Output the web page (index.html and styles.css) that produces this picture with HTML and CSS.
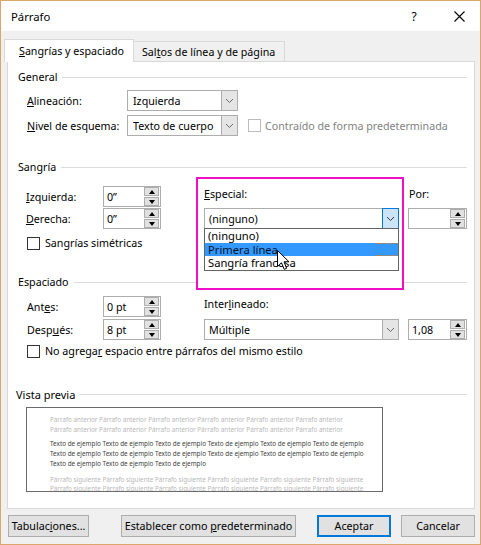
FILE: index.html
```html
<!DOCTYPE html>
<html lang="es">
<head>
<meta charset="utf-8">
<title>Párrafo</title>
<link rel="stylesheet" href="styles.css">
</head>
<body>
<div class="window">
  <div class="titlebar">
    <span class="title">Párrafo</span>
    <span class="help">?</span>
    <span class="close">
      <svg width="11" height="11" viewBox="0 0 11 11"><path d="M0.5 0.5 L10.5 10.5 M10.5 0.5 L0.5 10.5" stroke="#000" stroke-width="1.1" fill="none"/></svg>
    </span>
  </div>

  <div class="client">
    <div class="tabs">
      <div class="tab active"><u>S</u>angrías y espaciado</div>
      <div class="tab">Sal<u>t</u>os de línea y de página</div>
    </div>

    <div class="panel">
      <!-- General -->
      <div class="group general">
        <div class="legend"><span>General</span></div>
        <div class="row first">
          <span class="lbl w100"><u>A</u>lineación:</span>
          <div class="combo w111"><span class="val">Izquierda</span><span class="drop"><svg width="7" height="4" viewBox="0 0 7 4"><path d="M0 0 L3.5 3.5 L7 0" stroke="#6a6a6a" fill="none"/></svg></span></div>
        </div>
        <div class="row">
          <span class="lbl w100"><u>N</u>ivel de esquema:</span>
          <div class="combo w111"><span class="val">Texto de cuerpo</span><span class="drop"><svg width="7" height="4" viewBox="0 0 7 4"><path d="M0 0 L3.5 3.5 L7 0" stroke="#6a6a6a" fill="none"/></svg></span></div>
          <span class="check disabled"></span>
          <span class="check-text disabled">Contraído de forma predeterminada</span>
        </div>
      </div>

      <!-- Sangría -->
      <div class="group sangria">
        <div class="legend"><span>Sangría</span></div>
        <div class="grid g-sangria">
          <span class="lbl c1"><u>I</u>zquierda:</span>
          <div class="spin c2"><span class="val">0”</span><span class="spin-btns"><span class="sb up"></span><span class="sb down"></span></span></div>
          <span class="lbl c4 over top-lbl"><u>E</u>special:</span>
          <span class="lbl c6 top-lbl">Por:</span>

          <span class="lbl c1"><u>D</u>erecha:</span>
          <div class="spin c2"><span class="val">0”</span><span class="spin-btns"><span class="sb up"></span><span class="sb down"></span></span></div>
          <div class="combo c4 over open">
            <span class="val">(ninguno)</span>
            <span class="drop hot"><svg width="7" height="4" viewBox="0 0 7 4"><path d="M0 0 L3.5 3.5 L7 0" stroke="#3c3c3c" fill="none"/></svg></span>
            <ul class="droplist">
              <li>(ninguno)</li>
              <li class="sel">Primera línea<span class="focus-mark"></span></li>
              <li>Sangría francesa</li>
            </ul>
            <svg class="cursor" width="13" height="21" viewBox="0 0 13 21"><path d="M0.5 0.5 L0.5 16.5 L4.5 12.8 L7.2 19.3 L9.6 18.3 L7 11.8 L12 11.8 Z" fill="#fff" stroke="#000" stroke-width="1"/></svg>
          </div>
          <div class="spin c6"><span class="val"></span><span class="spin-btns"><span class="sb up"></span><span class="sb down"></span></span></div>

          <div class="check-row span-all">
            <span class="check"></span>
            <span class="check-text">Sangrías simétricas</span>
          </div>
        </div>
        <div class="callout"></div>
      </div>

      <!-- Espaciado -->
      <div class="group espaciado">
        <div class="legend"><span>Espaciado</span></div>
        <div class="grid g-espaciado">
          <span class="lbl c1">Ant<u>e</u>s:</span>
          <div class="spin c2"><span class="val">0 pt</span><span class="spin-btns"><span class="sb up"></span><span class="sb down"></span></span></div>
          <span class="lbl c4 top-lbl">Inter<u>l</u>ineado:</span>

          <span class="lbl c1">Desp<u>u</u>és:</span>
          <div class="spin c2"><span class="val">8 pt</span><span class="spin-btns"><span class="sb up"></span><span class="sb down"></span></span></div>
          <div class="combo c4"><span class="val">Múltiple</span><span class="drop"><svg width="7" height="4" viewBox="0 0 7 4"><path d="M0 0 L3.5 3.5 L7 0" stroke="#6a6a6a" fill="none"/></svg></span></div>
          <div class="spin c6"><span class="val">1,08</span><span class="spin-btns"><span class="sb up"></span><span class="sb down"></span></span></div>

          <div class="check-row span-all tight">
            <span class="check"></span>
            <span class="check-text">No agrega<u>r</u> espacio entre párrafos del mismo estilo</span>
          </div>
        </div>
      </div>

      <!-- Vista previa -->
      <div class="group preview-group">
        <div class="legend wide"><span>Vista previa</span></div>
        <div class="preview">
          <div class="pl prev">Párrafo anterior Párrafo anterior Párrafo anterior Párrafo anterior Párrafo anterior Párrafo anterior</div>
          <div class="pl prev">Párrafo anterior Párrafo anterior Párrafo anterior Párrafo anterior Párrafo anterior Párrafo anterior</div>
          <div class="pl sample gap">Texto de ejemplo Texto de ejemplo Texto de ejemplo Texto de ejemplo Texto de ejemplo Texto de ejemplo</div>
          <div class="pl sample">Texto de ejemplo Texto de ejemplo Texto de ejemplo Texto de ejemplo Texto de ejemplo Texto de ejemplo</div>
          <div class="pl sample">Texto de ejemplo Texto de ejemplo Texto de ejemplo</div>
          <div class="pl next gap2">Párrafo siguiente Párrafo siguiente Párrafo siguiente Párrafo siguiente Párrafo siguiente Párrafo siguiente</div>
          <div class="pl next last">Párrafo siguiente Párrafo siguiente Párrafo siguiente Párrafo siguiente Párrafo siguiente Párrafo siguiente</div>
        </div>
      </div>
    </div>

    <div class="buttons">
      <button class="btn b-tabs">Tabulac<u>i</u>ones...</button>
      <button class="btn b-default">Establecer como <u>p</u>redeterminado</button>
      <button class="btn b-ok">Aceptar</button>
      <button class="btn b-cancel">Cancelar</button>
    </div>
  </div>
</div>
</body>
</html>
```

FILE: styles.css
```css
* { box-sizing: border-box; }

html, body {
  margin: 0;
  padding: 0;
}

body {
  width: 481px;
  height: 545px;
  overflow: hidden;
  font-family: "Noto Sans", "Segoe UI", sans-serif;
  font-size: 10.7px;
  color: #000;
  background: #fff;
}

u { text-decoration: underline; text-underline-offset: 1px; }

/* window frame */
.window {
  width: 481px;
  height: 545px;
  border: 1px solid #dba56c;
  background: #f0f0f0;
  display: flex;
  flex-direction: column;
}

.titlebar {
  flex: none;
  height: 30px;
  background: #fff;
  display: flex;
  align-items: center;
  padding-left: 10px;
  font-size: 11.3px;
}
.title { flex: 1; }
.help {
  width: 50px;
  text-align: center;
  font-size: 12px;
}
.close {
  width: 41px;
  display: flex;
  justify-content: center;
  align-items: center;
}

.client {
  flex: 1;
  padding: 8px 5px 0 6px;
  display: flex;
  flex-direction: column;
}

/* tabs */
.tabs {
  display: flex;
  align-items: flex-end;
  height: 23px;
  margin-left: -3px;
}
.tab {
  height: 21px;
  padding: 0 9px 0 8px;
  border: 1px solid #d9d9d9;
  border-bottom: none;
  background: #f0f0f0;
  display: flex;
  align-items: center;
  white-space: nowrap;
  margin-left: -1px;
}
.tab.active {
  position: relative;
  z-index: 3;
  height: 23px;
  width: 130px;
  padding: 0 0 1px 14px;
  background: #fff;
  margin-left: 0;
}

/* tab page */
.panel {
  position: relative;
  z-index: 1;
  margin-top: -1px;
  width: 468px;
  height: 448px;
  border: 1px solid #d9d9d9;
  background: #fff;
  padding-top: 8px;
}

.group { position: relative; }
.sangria { margin-top: 24px; }
.espaciado { margin-top: 24px; }
.preview-group { margin-top: 28px; }

.legend {
  height: 14px;
  display: flex;
  align-items: center;
  padding: 0 7px 0 10px;
  white-space: nowrap;
}
.legend::after {
  content: "";
  flex: 1;
  height: 1px;
  background: #dcdcdc;
  margin-left: 5px;
}
.legend.wide { padding-left: 8px; font-size: 11px; }

.row {
  display: flex;
  align-items: center;
  height: 21px;
  padding-left: 19px;
  margin-top: 4px;
}
.row.first { margin-top: 6px; }

.lbl { white-space: nowrap; }
.w100 { width: 100px; flex: none; }
.w111 { width: 111px; flex: none; }

/* combo boxes */
.combo {
  position: relative;
  height: 21px;
  border: 1px solid #adadad;
  background: #fff;
  display: flex;
  align-items: center;
}
.combo .val {
  flex: 1;
  padding-left: 5px;
  white-space: nowrap;
  overflow: hidden;
}
.combo.c4 .val { padding-left: 4px; }
.drop {
  width: 17px;
  height: 21px;
  margin: -1px -1px -1px 0;
  border: 1px solid #adadad;
  background: #e5e5e5;
  display: flex;
  align-items: center;
  justify-content: center;
  flex: none;
}
.drop.hot {
  background: #cce4f7;
  border-color: #0078d7;
}

.droplist {
  position: absolute;
  left: -1px;
  right: -1px;
  top: 19px;
  margin: 0;
  padding: 0;
  list-style: none;
  border: 1px solid #646464;
  background: #fff;
  z-index: 5;
}
.droplist li {
  position: relative;
  height: 13.5px;
  line-height: 13px;
  padding-left: 3px;
  font-size: 11.2px;
  white-space: nowrap;
}
.droplist li.sel { background: #3399ff; color: #04122a; }
.focus-mark {
  position: absolute;
  right: 0;
  top: 0;
  width: 22px;
  height: 100%;
  border-top: 1px dotted #e07b1e;
  border-bottom: 1px dotted #e07b1e;
}
.cursor {
  position: absolute;
  left: 72px;
  top: 41px;
  z-index: 6;
}

/* spin boxes */
.spin {
  position: relative;
  height: 21px;
  border: 1px solid #adadad;
  background: #fff;
  display: flex;
  align-items: center;
}
.spin .val {
  flex: 1;
  padding-left: 3px;
  white-space: nowrap;
}
.spin-btns {
  width: 15px;
  height: 19px;
  margin-right: 1px;
  display: flex;
  flex-direction: column;
  gap: 1px;
  flex: none;
}
.sb {
  flex: 1;
  background: #e1e1e1;
  border: 1px solid #adadad;
  display: flex;
  align-items: center;
  justify-content: center;
}
.sb::after {
  content: "";
  border-left: 3.5px solid transparent;
  border-right: 3.5px solid transparent;
}
.sb.up::after { border-bottom: 4px solid #000; }
.sb.down::after { border-top: 4px solid #000; }

/* indentation / spacing grids */
.grid {
  display: grid;
  grid-template-columns: 77px 58px 43px 195px 10px 58px;
  grid-template-rows: 21px 21px auto;
  align-items: center;
  padding-left: 18px;
}
.g-sangria { margin-top: 12px; row-gap: 1px; }
.g-espaciado { margin-top: 7px; row-gap: 2px; }
.g-espaciado .c1 { padding-left: 1px; }
.c1 { grid-column: 1; }
.c2 { grid-column: 2; }
.c4 { grid-column: 4; }
.c6 { grid-column: 6; }
.c6.spin { margin-left: -1px; }
.top-lbl { align-self: start; padding-top: 1px; }
.over { position: relative; z-index: 3; }
.span-all {
  grid-column: 1 / -1;
}

.check-row {
  display: flex;
  align-items: center;
  height: 16px;
  margin-top: 5px;
  padding-left: 1px;
}
.check-row.tight { margin-top: 1px; }
.check {
  width: 13px;
  height: 13px;
  border: 1px solid #333;
  background: #fff;
  flex: none;
}
.row .check { margin-left: 10px; }
.check-text { margin-left: 5px; white-space: nowrap; }
.row .check-text { margin-left: 4px; }
.check.disabled { border-color: #bcbcbc; }
.check-text.disabled { color: #838383; }

/* highlight frame around the special indent list */
.callout {
  position: absolute;
  left: 188px;
  top: 17px;
  width: 208px;
  height: 113px;
  border: 2px solid #f00fc4;
  background: #fff;
  z-index: 2;
}

/* preview */
.preview {
  margin: 6px 0 0 18px;
  width: 357px;
  height: 85px;
  border: 1px solid #6a6a6a;
  background: #fff;
  padding: 7px 0 0 23px;
  overflow: hidden;
}
.pl {
  height: 10px;
  line-height: 10px;
  font-size: 6.3px;
  white-space: nowrap;
}
.pl.prev, .pl.next { color: #b8b8b8; }
.pl.sample { color: #3e3e3e; font-size: 6.35px; }
.pl.gap { margin-top: 4px; }
.pl.gap2 { margin-top: 6px; }
.pl.last { height: 7px; line-height: 7px; }

/* dialog buttons */
.buttons {
  display: flex;
  margin-top: 6px;
  height: 22px;
  padding-left: 1px;
}
.btn {
  height: 22px;
  font: inherit;
  color: #000;
  background: #e1e1e1;
  border: 1px solid #adadad;
  padding: 0;
  margin: 0;
  white-space: nowrap;
}
.b-tabs { width: 81px; }
.b-default { width: 175px; margin-left: 32px; }
.b-ok { width: 74px; margin-left: 21px; border: 2px solid #0078d7; }
.b-cancel { width: 74px; margin-left: 10px; }
```
